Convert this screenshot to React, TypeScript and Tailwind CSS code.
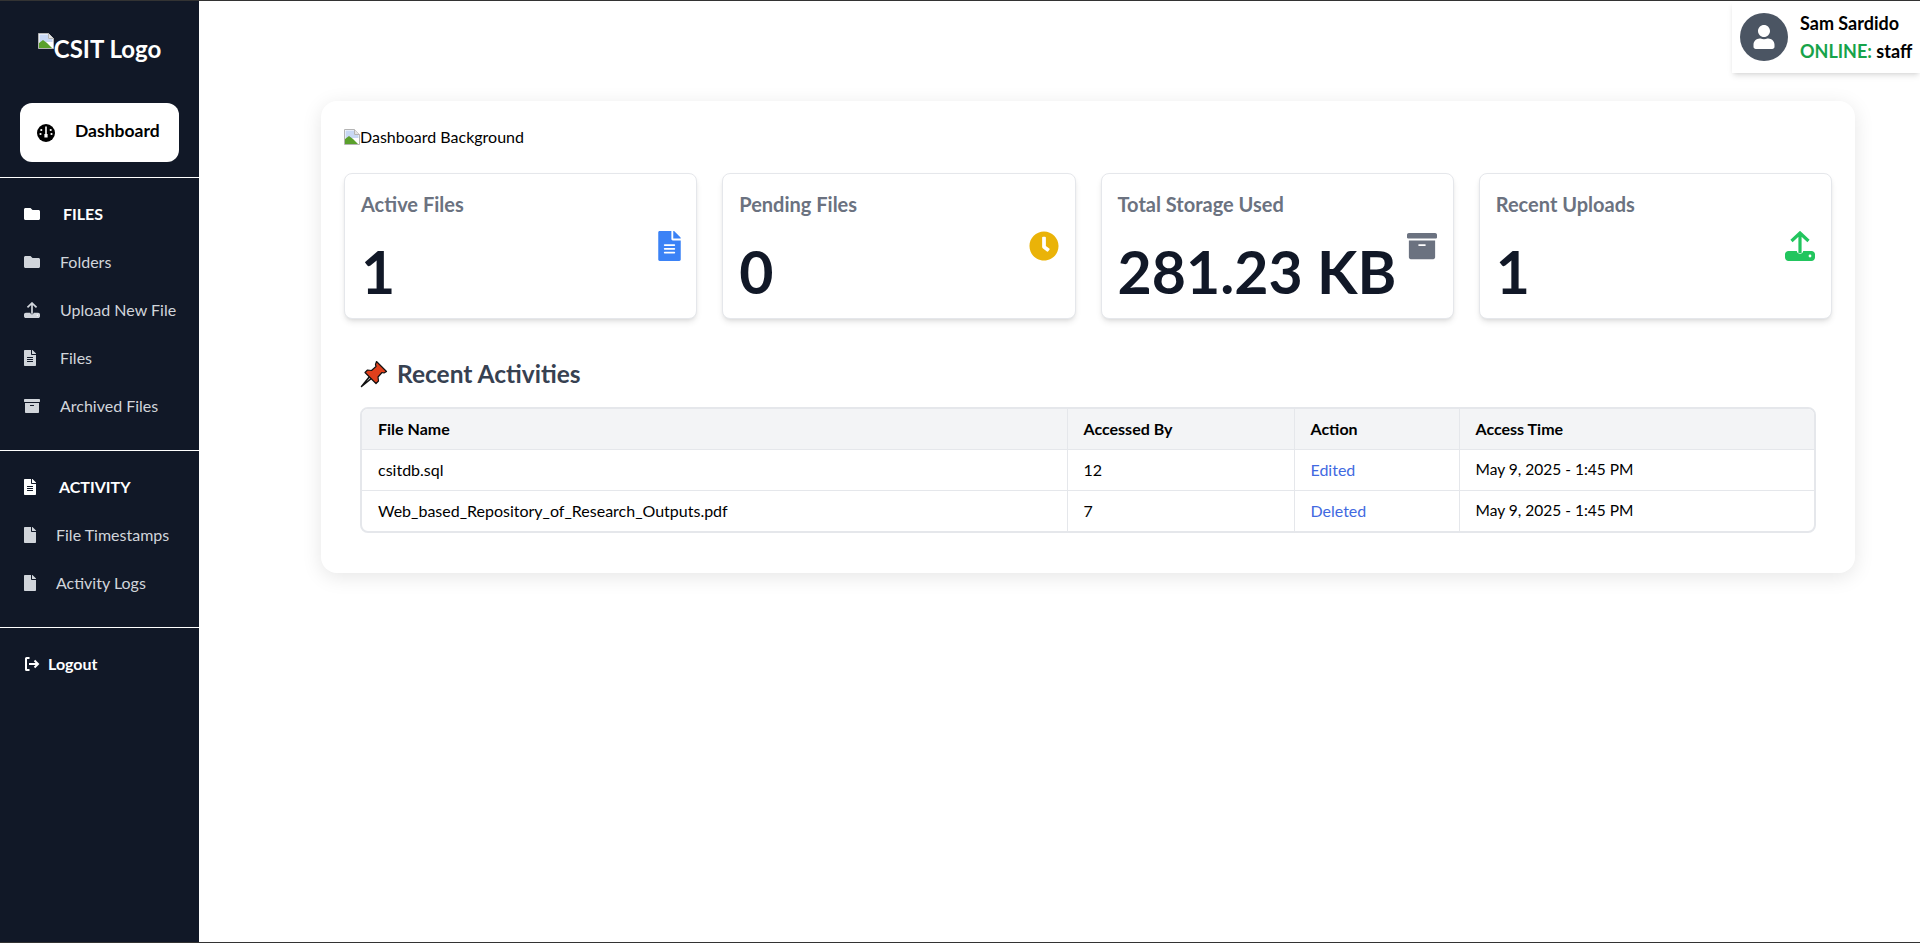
import React from 'react';
import { FaFolder, FaFileAlt, FaFile, FaArchive, FaClock, FaUser } from 'react-icons/fa';

// the reference shows broken <img> placeholders, so this redraws that glyph
function BrokenImage({ className }: { className?: string }) {
  return (
    <svg viewBox="0 0 16 16" className={className}>
      <path d="M0.5 0.5h10l5 5v10h-15z" fill="#fff" stroke="#b4b4b4" />
      <path d="M10.5 0.5v5h5" fill="#e4e4e4" stroke="#b4b4b4" />
      <path d="M1.500 1.500h8.500v4.500h4.500v3L1.500 9z" fill="#c8d8f4" />
      <path d="M1 15V10l4-3 4 3 5 5z" fill="#5aa02c" />
    </svg>
  );
}

function DashIcon({ className }: { className?: string }) {
  return (
    <svg viewBox="0 0 18 18" className={className}>
      <circle cx="9" cy="9" r="9" fill="currentColor" />
      <path d="M8.200 2.500h1.600v7.500h.8v3.500H7.400V10h.8z" fill="#fff" />
      <circle cx="4.300" cy="6" r="1.100" fill="#fff" />
      <circle cx="13.700" cy="6" r="1.100" fill="#fff" />
      <circle cx="3.500" cy="10" r="1.100" fill="#fff" />
      <circle cx="14.500" cy="10" r="1.100" fill="#fff" />
    </svg>
  );
}

function UploadIcon({ className }: { className?: string }) {
  return (
    <svg viewBox="0 0 30 30" className={className}>
      <path d="M15 22V2M6.500 10 15 2l8.500 8" fill="none" stroke="currentColor" strokeWidth="3.200" />
      <path d="M3.500 20h8.300c.3 1.800 1.500 2.800 3.200 2.800s2.900-1 3.200-2.800h8.300c1.900 0 3.500 1.500 3.500 3.300v3.200c0 1.900-1.600 3.500-3.500 3.500h-23C1.600 30 0 28.400 0 26.500v-3.200C0 21.500 1.600 20 3.500 20z" fill="currentColor" />
      <circle cx="25" cy="25" r="1.400" fill="#fff" />
    </svg>
  );
}

function LogoutIcon({ className }: { className?: string }) {
  return (
    <svg viewBox="0 0 16 16" className={className} fill="none" stroke="currentColor" strokeWidth="2">
      <path d="M5.500 2H2.500Q2 2 2 2.500v11q0 .5.5.5h3" />
      <path d="M5 8h9M10.500 4.500 14 8l-3.500 3.500" />
    </svg>
  );
}

function PinIcon({ className }: { className?: string }) {
  return (
    <svg viewBox="0 0 28 28" className={className}>
      <path d="M1.500 26.500 10 16l2 2z" fill="#c9c9c9" stroke="#111" strokeWidth="1.500" strokeLinejoin="round" />
      <path d="M16.500 1.500 26.500 11.500 24 13l-2-.5-4 4.500.5 4-2.500 2.500L5 12.500 7.500 10l4 .5 4.500-4-.5-2z" fill="#e0401c" stroke="#111" strokeWidth="1.200" strokeLinejoin="round" />
    </svg>
  );
}

type NavItem = { label: string; icon: React.ReactNode; labelClass: string };

const fileItems: NavItem[] = [
  { label: 'Folders', icon: <FaFolder className="w-4 h-4" />, labelClass: 'ml-5' },
  { label: 'Upload New File', icon: <UploadIcon className="w-4 h-4" />, labelClass: 'ml-5' },
  { label: 'Files', icon: <FaFileAlt className="w-4 h-4 -ml-0.5" />, labelClass: 'ml-5' },
  { label: 'Archived Files', icon: <FaArchive className="w-4 h-4" />, labelClass: 'ml-5' },
];

const activityItems: NavItem[] = [
  { label: 'File Timestamps', icon: <FaFile className="w-4 h-4 -ml-0.5" />, labelClass: 'ml-4' },
  { label: 'Activity Logs', icon: <FaFile className="w-4 h-4 -ml-0.5" />, labelClass: 'ml-4' },
];

function NavRow({ item }: { item: NavItem }) {
  return (
    <a className="h-12 flex items-center pl-6 text-[#d1d5db] text-base">
      <span className="w-4 flex shrink-0">{item.icon}</span>
      <span className={item.labelClass}>{item.label}</span>
    </a>
  );
}

function Sidebar() {
  return (
    <aside className="w-[199px] shrink-0 bg-[#111827] text-white flex flex-col">
      <div className="h-[102px] flex items-start justify-center pt-8">
        <div className="flex items-start">
          <BrokenImage className="w-4 h-4" />
          <span className="text-2xl font-bold leading-[30px] mt-px">CSIT Logo</span>
        </div>
      </div>
      <a className="mx-5 h-[59px] bg-white rounded-xl text-black flex items-center pl-[17px] font-bold text-[17.5px]">
        <DashIcon className="w-[18px] h-[18px]" />
        <span className="ml-5 -mt-[3px]">Dashboard</span>
      </a>
      <hr className="mt-[15px] border-0 border-t border-white" />
      <div className="pt-3 pb-5">
        <div className="h-12 flex items-center pl-6 font-bold text-base">
          <FaFolder className="w-4 h-4" />
          <span className="ml-[23px]">FILES</span>
        </div>
        {fileItems.map((item) => <NavRow key={item.label} item={item} />)}
      </div>
      <hr className="border-0 border-t border-white" />
      <div className="pt-3 pb-5">
        <div className="h-12 flex items-center pl-6 font-bold text-base">
          <FaFileAlt className="w-4 h-4 -ml-0.5" />
          <span className="ml-[21px]">ACTIVITY</span>
        </div>
        {activityItems.map((item) => <NavRow key={item.label} item={item} />)}
      </div>
      <hr className="border-0 border-t border-white" />
      <a className="mt-3 h-12 flex items-center pl-6 font-bold text-base">
        <LogoutIcon className="w-4 h-4" />
        <span className="ml-2">Logout</span>
      </a>
    </aside>
  );
}

type Stat = { title: string; value: string; icon: React.ReactNode };

const stats: Stat[] = [
  { title: 'Active Files', value: '1', icon: <FaFileAlt className="w-[23px] h-[30px] text-[#3b82f6] translate-x-px" /> },
  { title: 'Pending Files', value: '0', icon: <FaClock className="w-[30px] h-[30px] text-[#eab308]" /> },
  { title: 'Total Storage Used', value: '281.23 KB', icon: <FaArchive className="w-[30px] h-[30px] text-[#6b7280]" /> },
  { title: 'Recent Uploads', value: '1', icon: <UploadIcon className="w-[30px] h-[30px] text-[#22c55e]" /> },
];

function StatCard({ stat }: { stat: Stat }) {
  return (
    <div className="h-[146px] bg-white border border-[#e5e7eb] rounded-lg shadow-md px-4 pt-4 flex flex-col">
      <div className="text-[20px] font-bold text-[#6b7280] leading-7">{stat.title}</div>
      <div className="flex justify-between items-start mt-1">
        <div className="text-[59px] font-bold text-[#111827] leading-[75px] pt-3">{stat.value}</div>
        <div className="mt-[9px]">{stat.icon}</div>
      </div>
    </div>
  );
}

const rows = [
  { file: 'csitdb.sql', by: '12', action: 'Edited', time: 'May 9, 2025 - 1:45 PM' },
  { file: 'Web_based_Repository_of_Research_Outputs.pdf', by: '7', action: 'Deleted', time: 'May 9, 2025 - 1:45 PM' },
];

function ActivityTable() {
  return (
    <div className="mx-4 border-2 border-[#e5e7eb] rounded-lg overflow-hidden">
      <table className="w-full border-collapse text-base table-fixed">
        <thead className="bg-[#f3f4f6]">
          <tr className="h-[40px] text-left">
            <th className="w-[705px] px-4 font-bold">File Name</th>
            <th className="w-[227px] px-4 font-bold border-l border-[#e5e7eb]">Accessed By</th>
            <th className="w-[165px] px-4 font-bold border-l border-[#e5e7eb]">Action</th>
            <th className="px-4 font-bold border-l border-[#e5e7eb]">Access Time</th>
          </tr>
        </thead>
        <tbody>
          {rows.map((r) => (
            <tr key={r.file} className="h-[41px] border-t border-[#e5e7eb]">
              <td className="px-4">{r.file}</td>
              <td className="px-4 border-l border-[#e5e7eb]">{r.by}</td>
              <td className="px-4 border-l border-[#e5e7eb] text-[#4169e1]">{r.action}</td>
              <td className="px-4 border-l border-[#e5e7eb] text-[15.5px]">{r.time}</td>
            </tr>
          ))}
        </tbody>
      </table>
    </div>
  );
}

export default function App() {
  return (
    <div className="relative h-[943px] flex bg-white text-black border-t border-b border-[#333] font-['Lato','Noto_Sans',sans-serif] overflow-hidden">
      <Sidebar />
      <main className="flex-1 pl-[122px] pt-[100px]">
        <section className="w-[1534px] h-[472px] bg-white rounded-2xl shadow-[0_4px_20px_rgba(0,0,0,0.1)] px-[23px] pt-6">
          <div className="flex items-center h-6 text-base">
            <BrokenImage className="w-4 h-4" />
            <span>Dashboard Background</span>
          </div>
          <div className="grid grid-cols-4 gap-[25px] mt-6">
            {stats.map((s) => <StatCard key={s.title} stat={s} />)}
          </div>
          <h2 className="mt-[38px] ml-4 h-[34px] flex items-center text-[24.500px] font-bold text-[#374151]">
            <PinIcon className="w-[28px] h-[28px] mr-[9px]" />
            Recent Activities
          </h2>
          <div className="mt-4">
            <ActivityTable />
          </div>
        </section>
      </main>
      <div className="absolute top-0 right-0 w-[188px] h-[72px] bg-white shadow-md flex items-center pl-2">
        <div className="w-12 h-12 rounded-full bg-[#4b5563] flex items-center justify-center text-white">
          <FaUser className="w-6 h-6" />
        </div>
        <div className="ml-3 font-bold text-lg leading-7">
          <div>Sam Sardido</div>
          <div><span className="text-[#16a34a]">ONLINE:</span> staff</div>
        </div>
      </div>
    </div>
  );
}
